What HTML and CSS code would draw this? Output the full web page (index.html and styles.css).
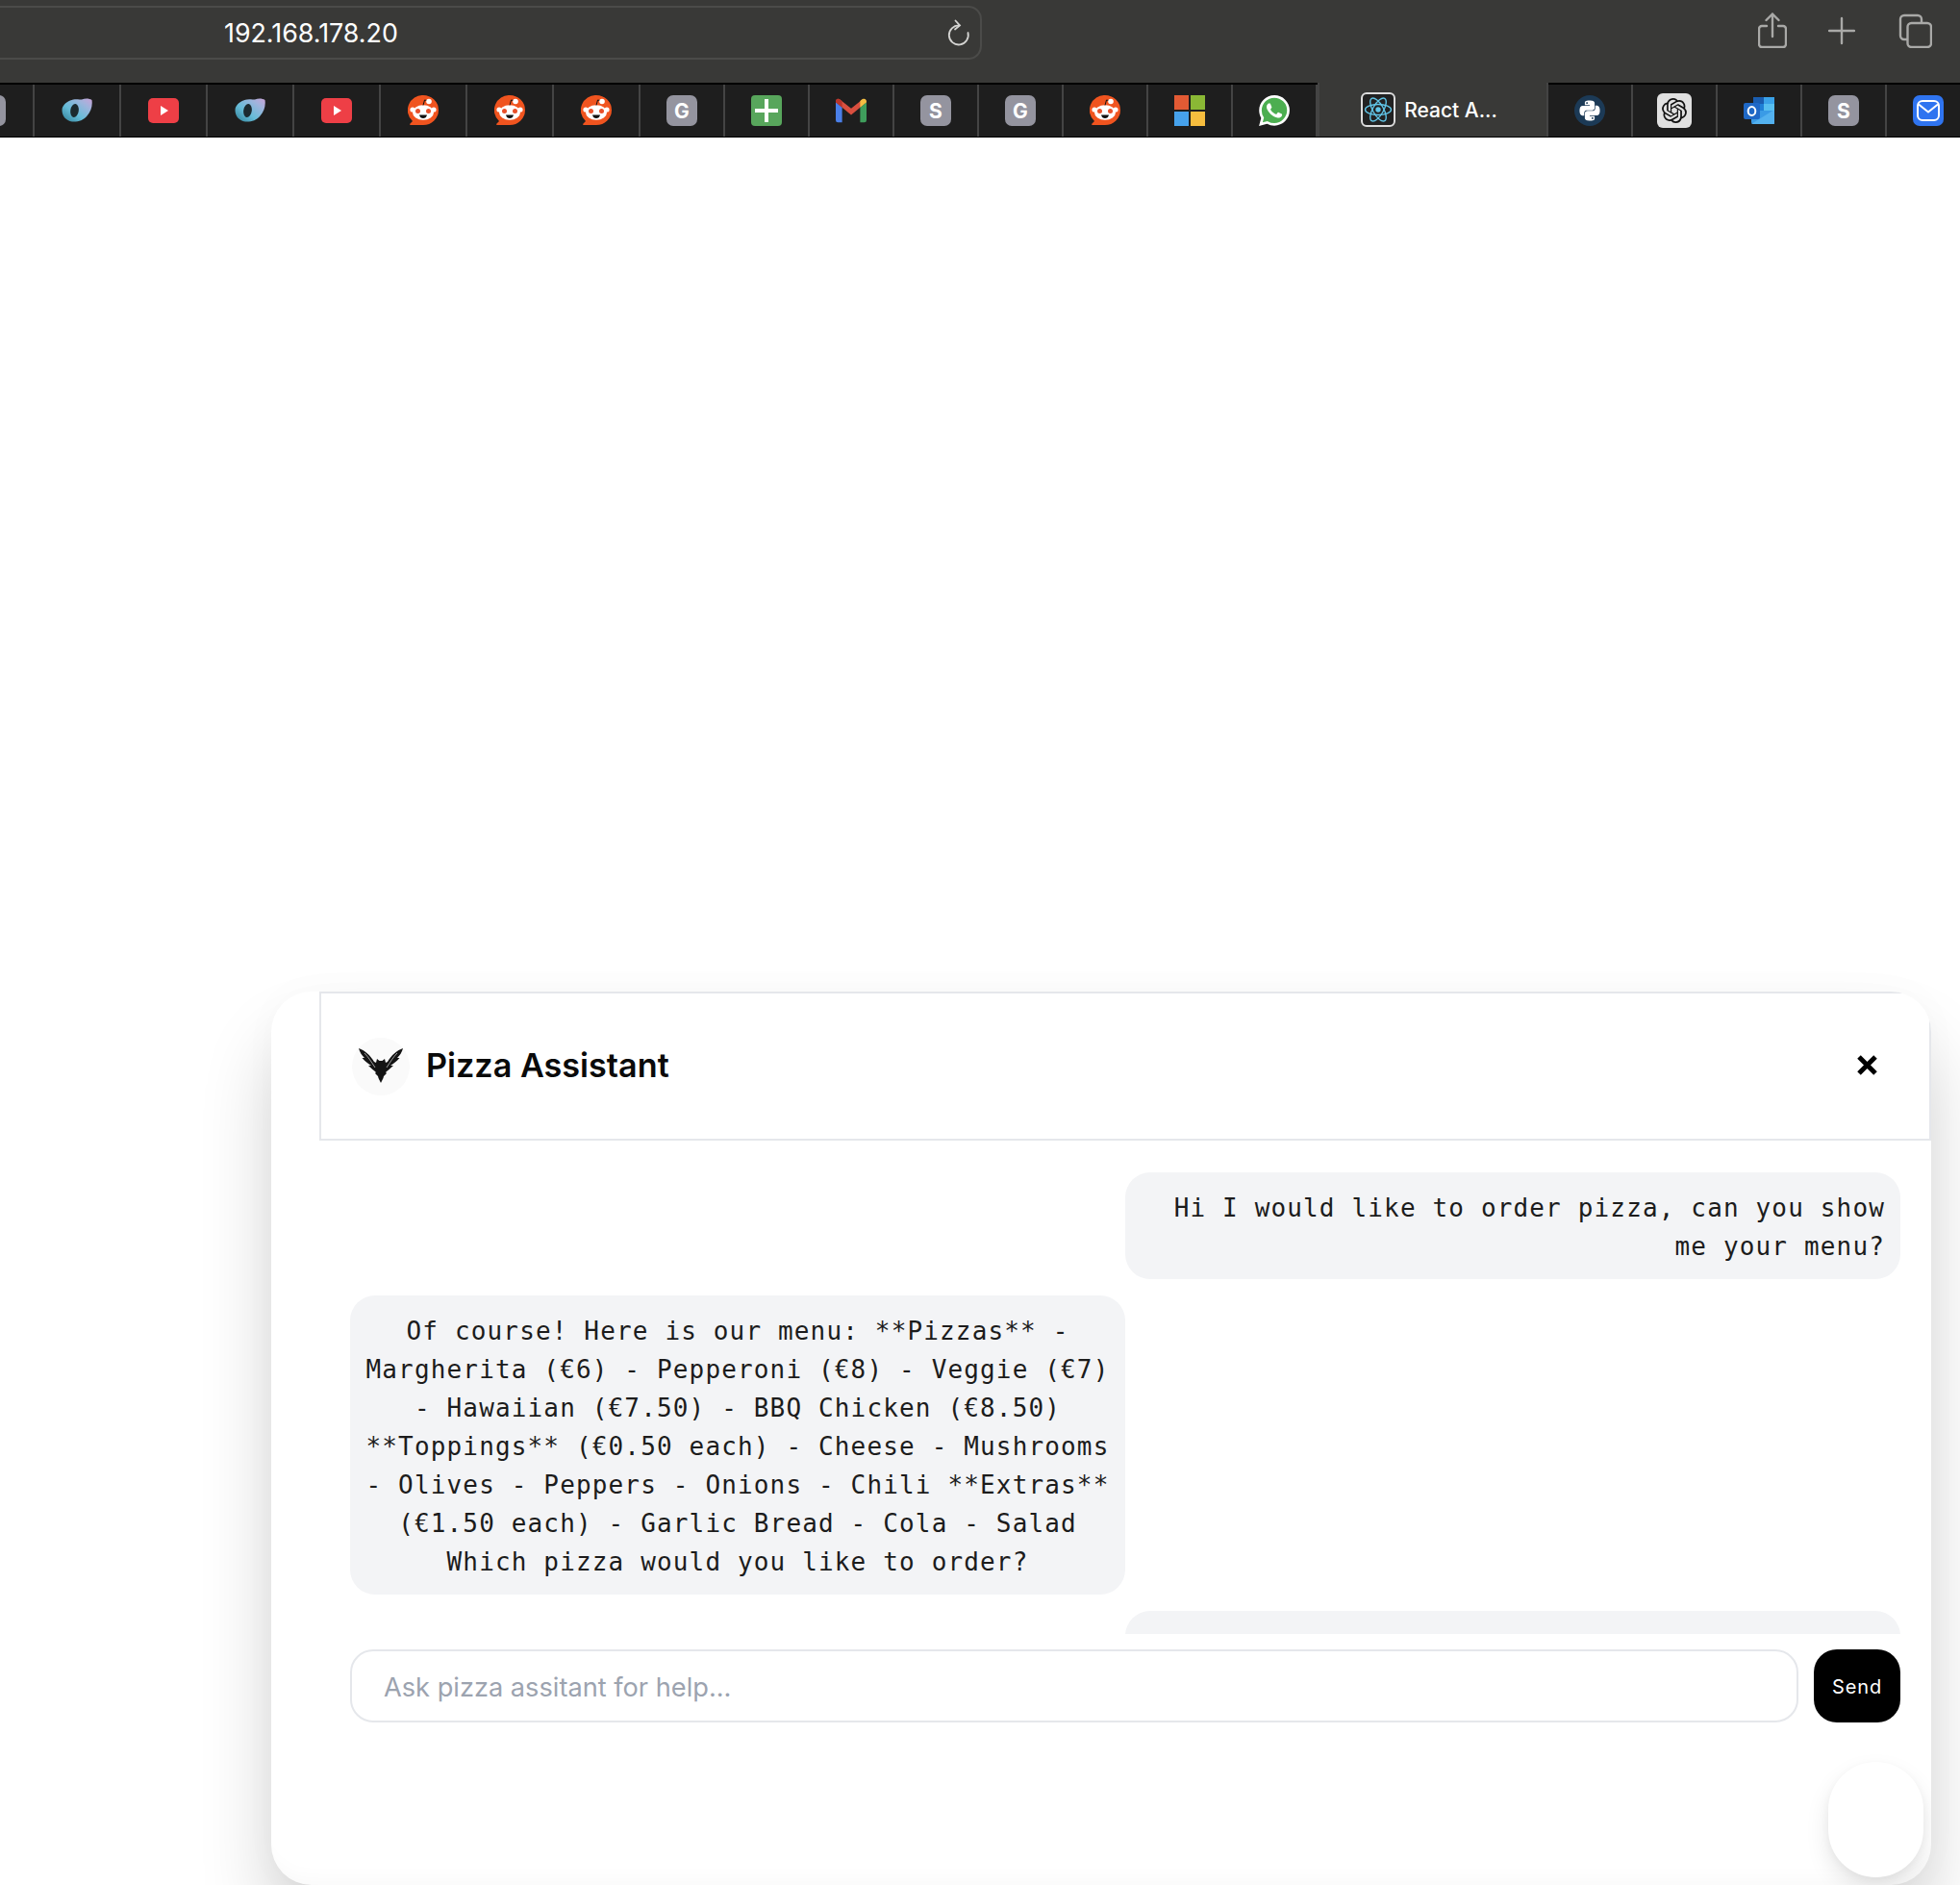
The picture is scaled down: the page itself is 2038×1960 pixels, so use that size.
FILE: index.html
```html
<!DOCTYPE html>
<html lang="en">
<head>
<meta charset="utf-8">
<title>React App</title>
<link rel="stylesheet" href="styles.css">
</head>
<body>
<svg class="defs" aria-hidden="true">
  <defs>
    <linearGradient id="weaveGrad" x1="0" y1="1" x2="1" y2="0">
      <stop offset="0" stop-color="#2f7f96"/><stop offset=".4" stop-color="#66bcd8"/><stop offset=".75" stop-color="#9fb4dc"/><stop offset="1" stop-color="#c9a3d8"/>
    </linearGradient>
    <symbol id="weave" viewBox="0 0 32 32">
      <path d="M9 5.500C13 3.500 18 4.500 21 4.500 25 3 29 3.500 31.500 5c1 6-1 12-5 16.500-4 5-10 6.500-15.500 6C4.500 26.500 .5 21.500 .5 15.500 .5 11 4.500 7.500 9 5.500z" fill="url(#weaveGrad)"/>
      <ellipse cx="13.500" cy="16" rx="4.300" ry="7" transform="rotate(8 13.500 16)" fill="#1c2a2f"/>
    </symbol>
    <symbol id="yt" viewBox="0 0 32 32">
      <rect x="0" y="3" width="32" height="26" rx="5" fill="#ee3f46"/>
      <path d="M13 11l8 5-8 5z" fill="#fff"/>
    </symbol>
    <symbol id="reddit" viewBox="0 0 32 32">
      <path d="M16 0a16 15.500 0 0 1 0 31H3c-1 0-1.300-1-.5-1.600L5 27A15.500 15.500 0 0 1 16 0z" fill="#f0541f"/>
      <circle cx="5" cy="15" r="2.600" fill="#fff"/><circle cx="27" cy="15" r="2.600" fill="#fff"/>
      <ellipse cx="16" cy="18" rx="11" ry="7.800" fill="#fff"/>
      <circle cx="10.500" cy="16.500" r="2.500" fill="#e8502a"/><circle cx="21.500" cy="16.500" r="2.500" fill="#e8502a"/>
      <path d="M12 20.500h8c-.5 2.500-2 3.500-4 3.500s-3.500-1-4-3.500z" fill="#111"/>
      <path d="M16 10.500l1.500-5.500 3 .6" stroke="#111" stroke-width="1" fill="none"/>
      <circle cx="22" cy="6.500" r="2.800" fill="#fff"/>
    </symbol>
    <symbol id="gmail" viewBox="0 0 29 22">
      <path d="M2 0c1 0 2 .6 2.500 1L14.500 9 24.500 1C25.500 .3 29 0 29 3L14.500 15 0 3C0 1 1 0 2 0z" fill="#d94f3f"/>
      <path d="M0 3l6 5v14H2a2 2 0 0 1-2-2z" fill="#4a7fe8"/>
      <path d="M29 3l-6 5v14h4a2 2 0 0 0 2-2z" fill="#3f9e5c"/>
      <path d="M23 8l6-5c0-2-1-3.500-3-3-1 .2-2 1-3 2z" fill="#f3bd42"/>
      <path d="M0 3c0-2 1-3 2-3 1.500 0 2 .6 4 2v6z" fill="#b8352b"/>
    </symbol>
    <symbol id="ms" viewBox="0 0 32 32">
      <rect width="15" height="15" fill="#e25a34"/><rect x="17" width="15" height="15" fill="#8ab835"/>
      <rect y="17" width="15" height="15" fill="#46a2ec"/><rect x="17" y="17" width="15" height="15" fill="#f6bd3e"/>
    </symbol>
    <symbol id="wa" viewBox="0 0 24 24">
      <path d="M12 1.500a10.500 10.500 0 0 0-9 15.800L1.500 22.500l5.400-1.400A10.500 10.500 0 1 0 12 1.500z" fill="#4cae50"/>
      <path fill="#fff" d="M17.472 14.382c-.297-.149-1.758-.867-2.030-.967-.273-.099-.471-.148-.67.15-.197.297-.767.966-.94 1.164-.173.199-.347.223-.644.075-.297-.15-1.255-.463-2.390-1.475-.883-.788-1.480-1.761-1.653-2.059-.173-.297-.018-.458.13-.606.134-.133.298-.347.446-.52.149-.174.198-.298.298-.497.099-.198.05-.371-.025-.52-.075-.149-.669-1.612-.916-2.207-.242-.579-.487-.5-.669-.51-.173-.008-.371-.01-.57-.01-.198 0-.52.074-.792.372-.272.297-1.040 1.016-1.040 2.479 0 1.462 1.065 2.875 1.213 3.074.149.198 2.096 3.2 5.077 4.487.709.306 1.262.489 1.694.625.712.227 1.360.195 1.871.118.571-.085 1.758-.719 2.006-1.413.248-.694.248-1.289.173-1.413-.074-.124-.272-.198-.57-.347m-5.421 7.403h-.004a9.870 9.870 0 01-5.031-1.378l-.361-.214-3.741.982.998-3.648-.235-.374a9.860 9.860 0 01-1.510-5.260c.001-5.450 4.436-9.884 9.888-9.884 2.640 0 5.122 1.030 6.988 2.898a9.825 9.825 0 012.893 6.994c-.003 5.450-4.437 9.884-9.885 9.884m8.413-18.297A11.815 11.815 0 0012.050 0C5.495 0 .16 5.335.157 11.892c0 2.096.547 4.142 1.588 5.945L.057 24l6.305-1.654a11.882 11.882 0 005.683 1.448h.005c6.554 0 11.890-5.335 11.893-11.893a11.821 11.821 0 00-3.480-8.413z"/>
    </symbol>
    <symbol id="react" viewBox="0 0 36 36">
      <rect x="1" y="1" width="34" height="34" rx="5" fill="#222" stroke="#dcdcdc" stroke-width="2"/>
      <g fill="none" stroke="#61c6e8" stroke-width="1.400">
        <ellipse cx="18" cy="18" rx="13.500" ry="5.500"/>
        <ellipse cx="18" cy="18" rx="13.500" ry="5.500" transform="rotate(60 18 18)"/>
        <ellipse cx="18" cy="18" rx="13.500" ry="5.500" transform="rotate(120 18 18)"/>
      </g>
      <circle cx="18" cy="18" r="2.700" fill="#61c6e8"/>
    </symbol>
    <symbol id="python" viewBox="0 0 32 32">
      <circle cx="16" cy="16" r="16" fill="#1c3a56"/>
      <g transform="translate(5.500 5.500) scale(.875)">
        <path fill="#fff" d="M14.250.180l.9.2.730.260.590.3.450.320.340.340.250.340.160.330.1.3.040.260.020.2-.010.130V8.500l-.050.630-.130.550-.210.460-.260.380-.3.310-.330.250-.350.190-.350.140-.330.1-.3.070-.260.040-.210.020H8.770l-.690.050-.590.140-.5.220-.410.270-.330.320-.270.350-.2.360-.150.370-.1.350-.070.320-.040.270-.020.210v3.060H3.170l-.210-.030-.280-.070-.320-.120-.350-.180-.360-.260-.360-.360-.350-.460-.320-.590-.280-.730-.210-.880-.140-1.050-.050-1.230.060-1.220.160-1.040.240-.870.320-.710.360-.570.4-.44.420-.33.420-.24.4-.16.360-.1.320-.050.240-.010h.160l.060.010h8.160v-.830H6.180l-.010-2.750-.020-.370.050-.340.110-.310.170-.28.250-.26.310-.23.380-.2.440-.18.510-.15.580-.12.640-.1.710-.060.770-.040.840-.020 1.270.050zm-6.300 1.980l-.230.330-.080.410.080.410.230.340.330.220.410.090.410-.090.330-.22.230-.34.080-.41-.08-.41-.23-.33-.33-.22-.41-.09-.41.090zm13.090 3.950l.280.060.320.120.350.180.360.270.360.350.350.470.320.590.280.730.210.880.140 1.040.050 1.230-.060 1.230-.160 1.040-.240.860-.320.710-.360.570-.4.450-.42.330-.42.240-.4.160-.36.090-.32.050-.24.020-.16-.010h-8.220v.820h5.840l.010 2.760.020.360-.050.340-.11.310-.17.290-.25.250-.31.240-.38.2-.44.170-.51.150-.58.130-.64.090-.71.070-.77.040-.84.010-1.270-.040-1.070-.140-.9-.2-.730-.250-.590-.3-.450-.330-.340-.340-.250-.340-.160-.330-.1-.3-.040-.250-.020-.2.010-.130v-5.340l.050-.640.130-.540.210-.460.260-.380.3-.320.330-.240.350-.2.350-.140.330-.1.3-.060.260-.040.210-.020.130-.010h5.840l.690-.050.590-.140.5-.210.410-.280.330-.320.270-.350.2-.360.150-.360.1-.350.070-.320.040-.280.020-.210V6.070h2.090l.140.010zm-6.470 14.250l-.230.330-.080.410.080.410.230.330.330.230.410.080.410-.080.330-.23.230-.33.080-.41-.08-.41-.23-.33-.33-.23-.41-.08-.41.08z"/>
      </g>
    </symbol>
    <symbol id="gpt" viewBox="0 0 36 36">
      <rect width="36" height="36" rx="6" fill="#e0e0e0"/>
      <g transform="translate(5 5) scale(1.080)">
        <path fill="#111" d="M22.2819 9.8211a5.9847 5.9847 0 0 0-.5157-4.9108 6.0462 6.0462 0 0 0-6.5098-2.9A6.0651 6.0651 0 0 0 4.9807 4.1818a5.9847 5.9847 0 0 0-3.9977 2.9 6.0462 6.0462 0 0 0 .7427 7.0966 5.98 5.98 0 0 0 .511 4.9107 6.051 6.051 0 0 0 6.5146 2.9001A5.9847 5.9847 0 0 0 13.2599 24a6.0557 6.0557 0 0 0 5.7718-4.2058 5.9894 5.9894 0 0 0 3.9977-2.9001 6.0557 6.0557 0 0 0-.7475-7.0729zm-9.022 12.6081a4.4755 4.4755 0 0 1-2.8764-1.0408l.1419-.0804 4.7783-2.7582a.7948.7948 0 0 0 .3927-.6813v-6.7369l2.02 1.1686a.071.071 0 0 1 .038.052v5.5826a4.504 4.504 0 0 1-4.4945 4.4944zm-9.6607-4.1254a4.4708 4.4708 0 0 1-.5346-3.0137l.142.0852 4.783 2.7582a.7712.7712 0 0 0 .7806 0l5.8428-3.3685v2.3324a.0804.0804 0 0 1-.0332.0615L9.74 19.9502a4.4992 4.4992 0 0 1-6.1408-1.6464zM2.3408 7.8956a4.485 4.485 0 0 1 2.3655-1.9728V11.6a.7664.7664 0 0 0 .3879.6765l5.8144 3.3543-2.0201 1.1685a.0757.0757 0 0 1-.071 0l-4.8303-2.7865A4.504 4.504 0 0 1 2.3408 7.872zm16.5963 3.8558L13.1038 8.364 15.1192 7.2a.0757.0757 0 0 1 .071 0l4.8303 2.7913a4.4944 4.4944 0 0 1-.6765 8.1042v-5.6772a.79.79 0 0 0-.407-.667zm2.0107-3.0231l-.142-.0852-4.7735-2.7818a.7759.7759 0 0 0-.7854 0L9.409 9.2297V6.8974a.0662.0662 0 0 1 .0284-.0615l4.8303-2.7866a4.4992 4.4992 0 0 1 6.6802 4.66zM8.3065 12.863l-2.02-1.1638a.0804.0804 0 0 1-.038-.0567V6.0742a4.4992 4.4992 0 0 1 7.3757-3.4537l-.142.0805L8.704 5.459a.7948.7948 0 0 0-.3927.6813zm1.0976-2.3654l2.602-1.4998 2.6069 1.4998v2.9994l-2.5974 1.5093-2.6067-1.4997z"/>
      </g>
    </symbol>
    <symbol id="outlook" viewBox="0 0 32 28">
      <rect x="10" y="0" width="22" height="14" fill="#1b6fc4"/>
      <rect x="10" y="0" width="11" height="7" fill="#1a5db0"/>
      <rect x="21" y="0" width="11" height="7" fill="#3aa2e8"/>
      <rect x="10" y="7" width="11" height="7" fill="#1e7fd6"/>
      <rect x="21" y="7" width="11" height="7" fill="#57bff0"/>
      <path d="M8 14h24v12a2 2 0 0 1-2 2H10a2 2 0 0 1-2-2z" fill="#3a9be6"/>
      <path d="M8 28l24-15v15z" fill="#57b4ef" opacity=".9"/>
      <rect x="0" y="6" width="17" height="17" rx="2" fill="#1f68c6"/>
      <ellipse cx="8.500" cy="14.500" rx="3.800" ry="4.500" fill="none" stroke="#fff" stroke-width="2"/>
    </symbol>
    <symbol id="mail" viewBox="0 0 32 32">
      <rect width="32" height="32" rx="7" fill="#2f74f0"/>
      <rect x="5" y="6" width="22" height="20" rx="5" fill="none" stroke="#fff" stroke-width="2"/>
      <path d="M6 9.500l10 8 10-8" fill="none" stroke="#fff" stroke-width="2"/>
    </symbol>
  </defs>
</svg>

<header class="chrome">
  <div class="toolbar">
    <div class="urlbar">
      <span class="url">192.168.178.20</span>
      <svg class="reload" viewBox="0 0 24 28" fill="none" stroke="#d4d4d2" stroke-width="1.800" stroke-linecap="round">
        <path d="M12.500 6.500A10 10 0 1 0 21.500 14"/>
        <path d="M8.500 1.500l4.500 5-5 4"/>
      </svg>
    </div>
    <div class="actions">
      <svg class="act-share" viewBox="0 0 30 37" fill="none" stroke="#a9a9a7" stroke-width="2.400" stroke-linecap="round" stroke-linejoin="round">
        <path d="M9 14H4a3 3 0 0 0-3 3v16a3 3 0 0 0 3 3h22a3 3 0 0 0 3-3V17a3 3 0 0 0-3-3h-5"/>
        <path d="M15 25V1.500M8.500 8L15 1.500 21.500 8"/>
      </svg>
      <svg class="act-plus" viewBox="0 0 28 37" fill="none" stroke="#a9a9a7" stroke-width="2.400" stroke-linecap="round">
        <path d="M14 6v26M1 19h26"/>
      </svg>
      <svg class="act-tabs" viewBox="0 0 35 37" fill="none" stroke="#a9a9a7" stroke-width="2.400">
        <rect x="9.500" y="11" width="24.500" height="25" rx="4"/>
        <path d="M9.500 28H6a4 4 0 0 1-4-4V7a4 4 0 0 1 4-4h14a4 4 0 0 1 4 4v4"/>
      </svg>
    </div>
  </div>
  <nav class="tabs">
    <div class="tab tab-lg"><span class="tile"></span></div>
    <div class="tab tab-lg"><svg class="ico"><use href="#weave"/></svg></div>
    <div class="tab tab-lg"><svg class="ico"><use href="#yt"/></svg></div>
    <div class="tab tab-lg"><svg class="ico"><use href="#weave"/></svg></div>
    <div class="tab tab-lg"><svg class="ico"><use href="#yt"/></svg></div>
    <div class="tab tab-lg"><svg class="ico"><use href="#reddit"/></svg></div>
    <div class="tab tab-lg"><svg class="ico"><use href="#reddit"/></svg></div>
    <div class="tab tab-lg"><svg class="ico"><use href="#reddit"/></svg></div>
    <div class="tab"><span class="tile">G</span></div>
    <div class="tab"><span class="tile tile-green"><span class="cross"></span></span></div>
    <div class="tab"><svg class="ico"><use href="#gmail"/></svg></div>
    <div class="tab"><span class="tile">S</span></div>
    <div class="tab"><span class="tile">G</span></div>
    <div class="tab"><svg class="ico"><use href="#reddit"/></svg></div>
    <div class="tab"><svg class="ico"><use href="#ms"/></svg></div>
    <div class="tab"><svg class="ico"><use href="#wa"/></svg></div>
    <div class="tab tab-active"><svg class="ico-lg"><use href="#react"/></svg><span class="tab-title">React A...</span></div>
    <div class="tab"><svg class="ico"><use href="#python"/></svg></div>
    <div class="tab"><svg class="ico-lg"><use href="#gpt"/></svg></div>
    <div class="tab"><svg class="ico"><use href="#outlook"/></svg></div>
    <div class="tab"><span class="tile">S</span></div>
    <div class="tab"><svg class="ico"><use href="#mail"/></svg></div>
  </nav>
</header>

<main class="page">
  <section class="panel">
    <div class="panel-head">
      <div class="avatar">
        <svg class="eagle" viewBox="0 0 46 36">
          <path fill="#141414" d="M0 0C6 2 12 7 16 14L18 15 19 11 21.500 13H24.500L27 11 28 15 30 14C34 7 40 2 46 0 45 4 43 7 40 10L42.500 10C39 14 36 16 33 18L36 18C33 21 30 23 28 25L29 26 26 29 25.500 31 23 36 20.500 31 20 29 17 26 18 25C16 23 13 21 10 18L13 18C10 16 7 14 3.500 10L6 10C3 7 1 4 0 0Z"/>
          <path fill="none" stroke="#fafafa" stroke-width=".6" d="M6 5C10 9 13 14 17 20M40 5C36 9 33 14 29 20"/>
        </svg>
      </div>
      <h1 class="title">Pizza Assistant</h1>
      <svg class="close" viewBox="0 0 21 21" stroke="#000" stroke-width="5" fill="none"><path d="M2 2l17 17M19 2L2 19"/></svg>
    </div>
    <div class="messages">
      <div class="bubble bubble-user">Hi I would like to order pizza, can you show me your menu?</div>
      <div class="bubble bubble-bot">Of course! Here is our menu: **Pizzas** - Margherita (€6) - Pepperoni (€8) - Veggie (€7) - Hawaiian (€7.50) - BBQ Chicken (€8.50) **Toppings** (€0.50 each) - Cheese - Mushrooms - Olives - Peppers - Onions - Chili **Extras** (€1.50 each) - Garlic Bread - Cola - Salad Which pizza would you like to order?</div>
      <div class="bubble bubble-user bubble-cut"></div>
    </div>
    <form class="composer">
      <input class="field" type="text" placeholder="Ask pizza assitant for help...">
      <button class="send" type="button">Send</button>
    </form>
    <div class="fab"></div>
  </section>
</main>
</body>
</html>
```

FILE: styles.css
```css
* { box-sizing: border-box; }
html, body { margin: 0; padding: 0; height: 1960px; overflow: hidden; background: #fff; }
body { font-family: Inter, "Liberation Sans", sans-serif; }
.defs { position: absolute; width: 0; height: 0; }

.chrome { display: flex; flex-direction: column; }
.toolbar { display: flex; align-items: flex-start; height: 86px; padding-top: 6px; background: #393937; }
.urlbar { display: flex; align-items: center; justify-content: space-between; width: 1041px; height: 56px; margin-left: -20px; padding: 0 10px 0 251px; border: 2px solid #4b4b49; border-radius: 14px; }
.url { color: #fff; font-size: 26.8px; }
.reload { width: 24px; height: 28px; }
.actions { display: flex; gap: 45px; margin-left: auto; margin-top: 7px; padding-right: 29px; }
.act-share { width: 30px; height: 37px; margin-right: -2px; }
.act-plus { width: 28px; height: 37px; }
.act-tabs { width: 35px; height: 37px; }

.tabs { display: flex; height: 57px; margin-left: -54px; background: #1e1e1e; border-top: 2px solid #000; border-bottom: 1px solid #000; }
.tab { display: flex; flex: none; align-items: center; justify-content: center; width: 88px; border-right: 2px solid #444; }
.tab-lg { width: 90px; }
.tab-active { gap: 9px; width: 240px; margin-top: -2px; background: #393937; border-left: 2px solid #444; padding-left: 2px; padding-right: 10px; }
.tab-title { color: #fff; font-size: 21px; font-weight: 500; white-space: nowrap; }
.ico { width: 32px; height: 32px; }
.ico-lg { width: 36px; height: 36px; }
.tile { display: flex; align-items: center; justify-content: center; width: 32px; height: 32px; border-radius: 7px; background: #94949f; color: #fff; font-size: 21px; font-weight: 700; }
.tile-green { border-radius: 4px; background: #58a65c; }
.cross { display: block; width: 24px; height: 24px; background:
  linear-gradient(#fff, #fff) center / 100% 4px no-repeat,
  linear-gradient(#fff, #fff) center / 4px 100% no-repeat; }

.page { display: flex; justify-content: flex-end; padding: 888px 30px 0 0; }
.panel { position: relative; width: 1726px; height: 929px; background: #fff; border-radius: 42px; overflow: hidden; box-shadow: 0 50px 80px -6px rgba(0, 0, 0, .2), 0 0 40px rgba(0, 0, 0, .025), inset 0 -22px 24px -20px rgba(0, 0, 0, .035); }

.panel-head { display: flex; align-items: center; height: 155px; margin-left: 50px; padding: 0 32px; border: 2px solid #e5e7eb; gap: 17px; }
.avatar { display: flex; align-items: center; justify-content: center; flex: none; width: 60px; height: 60px; border-radius: 50%; background: #fafafa; }
.eagle { width: 46px; height: 36px; margin-top: -2px; }
.title { margin: -2px 0 0; color: #0a0a0a; font-size: 34.2px; font-weight: 600; }
.close { width: 21px; height: 21px; margin-left: auto; margin-right: 22px; margin-bottom: 2px; }

.messages { display: flex; flex-direction: column; gap: 17px; height: 513px; margin-left: 82px; margin-right: 32px; padding-top: 33px; overflow: hidden; }
.bubble { flex: none; width: 806px; padding: 17px 16px 14px; border-radius: 26px; background: #f3f4f6; color: #1c1c1c; font-family: "DejaVu Sans Mono", "Liberation Mono", monospace; font-size: 26px; line-height: 40px; letter-spacing: 1.15px; }
.bubble-user { align-self: flex-end; text-align: right; }
.bubble-bot { align-self: flex-start; text-align: center; }
.bubble-cut { height: 111px; }

.composer { display: flex; gap: 16px; margin: 16px 32px 0 82px; }
.field { flex: 1; height: 76px; padding: 2px 33px 0; border: 2px solid #e5e7eb; border-radius: 24px; background: #fff; font-family: Inter, sans-serif; font-size: 27.2px; color: #111; outline: none; }
.field::placeholder { color: #9ca3af; opacity: 1; }
.send { width: 90px; height: 76px; padding-top: 2px; border: 0; border-radius: 24px; background: #000; color: #fff; font-family: Inter, sans-serif; font-size: 20px; font-weight: 400; letter-spacing: .9px; }

.fab { position: absolute; right: 8px; bottom: 8px; width: 99px; height: 120px; border-radius: 50px; background: #fff; box-shadow: 0 12px 25px rgba(0, 0, 0, .1), 0 3px 8px rgba(0, 0, 0, .04); }
```
